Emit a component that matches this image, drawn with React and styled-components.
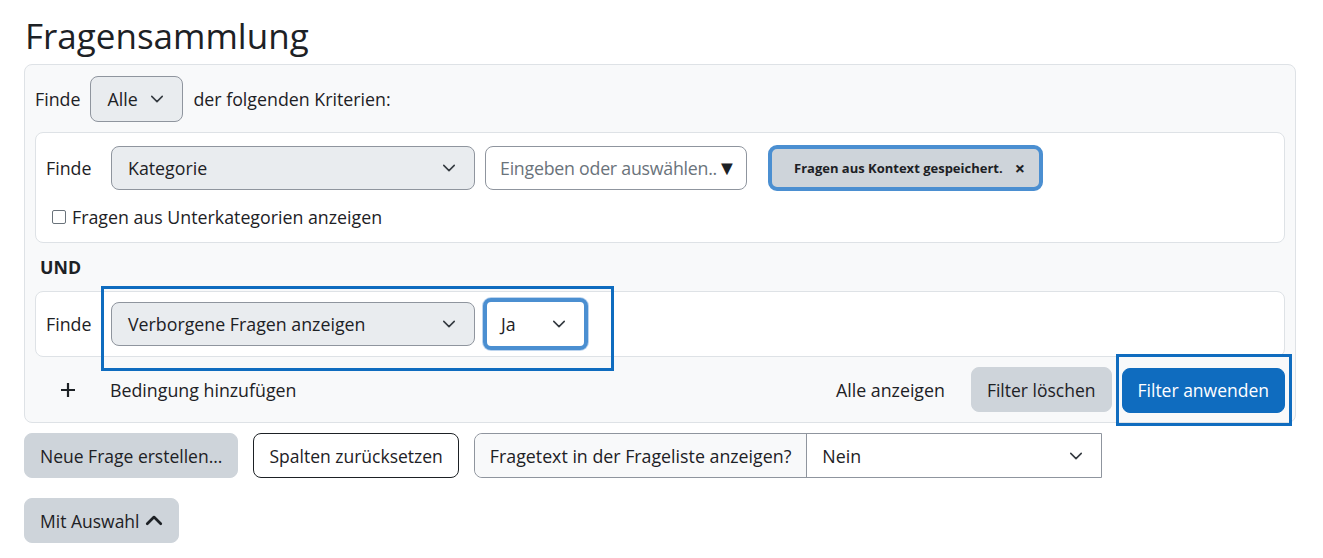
import styled, { createGlobalStyle } from 'styled-components'

const GlobalStyle = createGlobalStyle`
    body {
        margin: 0;
        background: #ffffff;
        font-family: "Open Sans", "Noto Sans", sans-serif;
        font-size: 17.8px;
        color: #1d2125;
    }
`

const Chevron = ({ up }) => (
    <svg width={up ? 18 : 14} height={up ? 18 : 14} viewBox="0 0 16 16" fill="none">
        <path
            d={up ? 'M2 10.5l6-6 6 6' : 'M2 5l6 6 6-6'}
            stroke={up ? '#1d2125' : '#343a40'}
            strokeWidth={up ? 2.4 : 1.8}
            strokeLinecap="round"
            strokeLinejoin="round"
        />
    </svg>
)

const PlusIcon = () => (
    <svg width="16" height="16" viewBox="0 0 16 16">
        <path d="M8 1v14M1 8h14" stroke="#1d2125" strokeWidth="2.2" />
    </svg>
)

const App = () => {
    return (
        <Page>
            <GlobalStyle />
            <Title>Fragensammlung</Title>
            <FilterPanel>
                <TopRow>
                    <span>Finde</span>
                    <Select width="93px" tall>
                        <span>Alle</span>
                        <Chevron />
                    </Select>
                    <span>der folgenden Kriterien:</span>
                </TopRow>

                <Card>
                    <CardRow>
                        <FindLabel>Finde</FindLabel>
                        <Select width="364px">
                            <span>Kategorie</span>
                            <Chevron />
                        </Select>
                        <TextInput>
                            <Placeholder>Eingeben oder auswählen..</Placeholder>
                            <Arrow>▼</Arrow>
                        </TextInput>
                        <Chip>
                            Fragen aus Kontext gespeichert.
                            <ChipClose>×</ChipClose>
                        </Chip>
                    </CardRow>
                    <CheckRow>
                        <CheckBox />
                        <span>Fragen aus Unterkategorien anzeigen</span>
                    </CheckRow>
                </Card>

                <Conjunction>UND</Conjunction>

                <Card>
                    <CardRow compact>
                        <FindLabel>Finde</FindLabel>
                        <Highlight>
                            <Select width="364px">
                                <span>Verborgene Fragen anzeigen</span>
                                <Chevron />
                            </Select>
                            <Select width="105px" white focused>
                                <span>Ja</span>
                                <Chevron />
                            </Select>
                        </Highlight>
                    </CardRow>
                </Card>

                <FooterRow>
                    <AddCondition>
                        <PlusIcon />
                        <span>Bedingung hinzufügen</span>
                    </AddCondition>
                    <Actions>
                        <LinkButton>Alle anzeigen</LinkButton>
                        <Button>Filter löschen</Button>
                        <ApplyFrame>
                            <Button primary>Filter anwenden</Button>
                        </ApplyFrame>
                    </Actions>
                </FooterRow>
            </FilterPanel>

            <ToolRow>
                <Button>Neue Frage erstellen...</Button>
                <Button outline>Spalten zurücksetzen</Button>
                <InputGroup>
                    <GroupLabel>Fragetext in der Frageliste anzeigen?</GroupLabel>
                    <GroupSelect>
                        <span>Nein</span>
                        <Chevron />
                    </GroupSelect>
                </InputGroup>
            </ToolRow>

            <ToolRow>
                <Button tight>
                    Mit Auswahl <Chevron up />
                </Button>
            </ToolRow>
        </Page>
    )
}

const Page = styled.div`
    padding: 14px 27px 0 24px;
    width: 1323px;
    box-sizing: border-box;
`

const Title = styled.h2`
    margin: 0 0 6px 1px;
    font-size: 35px;
    font-weight: 400;
    line-height: 44px;
    color: #1d2125;
`

const FilterPanel = styled.div`
    background: #f8f9fa;
    border: 1px solid #dee2e6;
    border-radius: 8px;
    padding: 11px 10px 0 10px;
    display: flex;
    flex-direction: column;
`

const TopRow = styled.div`
    display: flex;
    align-items: center;
    gap: 10px;
    height: 46px;
    margin-bottom: 10px;
`

const Card = styled.div`
    background: #ffffff;
    border: 1px solid #dee2e6;
    border-radius: 8px;
    padding: 0 10px;
`

const CardRow = styled.div`
    display: flex;
    align-items: center;
    height: ${p => (p.compact ? '64px' : '70px')};
    gap: 10px;
`

const FindLabel = styled.span`
    width: 55px;
`

const Select = styled.div`
    width: ${p => p.width};
    height: ${p => (p.tall ? '46px' : '44px')};
    box-sizing: border-box;
    display: flex;
    align-items: center;
    justify-content: space-between;
    padding: 0 18px 0 16px;
    background: ${p => (p.white ? '#ffffff' : '#e9ecef')};
    border: ${p => (p.focused ? '4px solid #4b8fd1' : '1px solid #8f959e')};
    border-radius: 8px;
    box-shadow: ${p => (p.focused ? '0 0 0 1px #bcd4ee' : 'none')};
    white-space: nowrap;
    ${p => p.focused && `
        height: 52px;
        padding: 0 18px 0 14px;
    `}
`

const TextInput = styled.div`
    width: 262px;
    height: 44px;
    box-sizing: border-box;
    display: flex;
    align-items: center;
    padding: 0 14px;
    border: 1px solid #8f959e;
    border-radius: 8px;
    background: #ffffff;
    white-space: nowrap;
    overflow: hidden;
`

const Placeholder = styled.span`
    color: #6a737b;
    letter-spacing: -0.25px;
`

const Arrow = styled.span`
    color: #1d2125;
    font-size: 20px;
    line-height: 1;
`

const Chip = styled.div`
    margin-left: 11px;
    height: 46px;
    box-sizing: border-box;
    display: flex;
    align-items: center;
    padding: 0 14px 0 22px;
    gap: 12px;
    background: #ced4da;
    border: 4px solid #4b8fd1;
    border-radius: 9px;
    font-size: 13px;
    font-weight: 700;
    white-space: nowrap;
`

const ChipClose = styled.span`
    font-size: 18px;
    font-weight: 700;
    line-height: 1;
`

const CheckRow = styled.div`
    display: flex;
    align-items: center;
    gap: 6px;
    height: 28px;
    padding: 0 0 11px 6px;
`

const CheckBox = styled.span`
    width: 12px;
    height: 12px;
    border: 1.5px solid #6a737b;
    border-radius: 2px;
    background: #fff;
`

const Conjunction = styled.div`
    font-weight: 700;
    display: flex;
    align-items: center;
    padding-left: 5px;
    height: 48px;
`

const Highlight = styled.div`
    align-self: flex-start;
    display: flex;
    align-items: center;
    gap: 8px;
    margin: -6px 0 0 -10px;
    padding: 9px 23px 18px 7px;
    border: 3px solid #0f6cbf;
    position: relative;
    z-index: 1;
`

const FooterRow = styled.div`
    display: flex;
    align-items: center;
    justify-content: space-between;
    height: 65px;
`

const AddCondition = styled.div`
    display: flex;
    align-items: center;
    gap: 34px;
    padding-left: 25px;
`

const Actions = styled.div`
    display: flex;
    align-items: center;
    gap: 10px;
`

const LinkButton = styled.span`
    padding: 0 16px;
`

const Button = styled.button`
    font-family: inherit;
    font-size: 17.5px;
    height: 45px;
    box-sizing: border-box;
    padding: 0 15px;
    display: inline-flex;
    align-items: center;
    gap: ${p => (p.tight ? '5px' : '8px')};
    border-radius: 8px;
    cursor: pointer;
    white-space: nowrap;
    color: ${p => (p.primary ? '#ffffff' : '#1d2125')};
    background: ${p => (p.primary ? '#0f6cbf' : p.outline ? '#ffffff' : '#ced4da')};
    border: 1px solid ${p => (p.primary ? '#0f6cbf' : p.outline ? '#1d2125' : '#ced4da')};
`

const ApplyFrame = styled.div`
    display: flex;
    border: 3px solid #0f6cbf;
    padding: 11px 4px 10px 3px;
    margin: 0 -7px 0 -6px;
    position: relative;
`

const ToolRow = styled.div`
    display: flex;
    align-items: center;
    gap: 15px;
    margin-top: 10px;
    & + & {
        margin-top: 20px;
    }
`

const InputGroup = styled.div`
    display: flex;
    height: 45px;
    box-sizing: border-box;
    border: 1px solid #8f959e;
    border-radius: 8px 0 0 8px;
`

const GroupLabel = styled.div`
    display: flex;
    align-items: center;
    padding: 0 15px 0 15px;
    background: #f8f9fa;
    border-right: 1px solid #8f959e;
    border-radius: 8px 0 0 8px;
    white-space: nowrap;
`

const GroupSelect = styled.div`
    width: 294px;
    box-sizing: border-box;
    display: flex;
    align-items: center;
    justify-content: space-between;
    padding: 0 18px 0 15px;
    background: #ffffff;
`

export default App
